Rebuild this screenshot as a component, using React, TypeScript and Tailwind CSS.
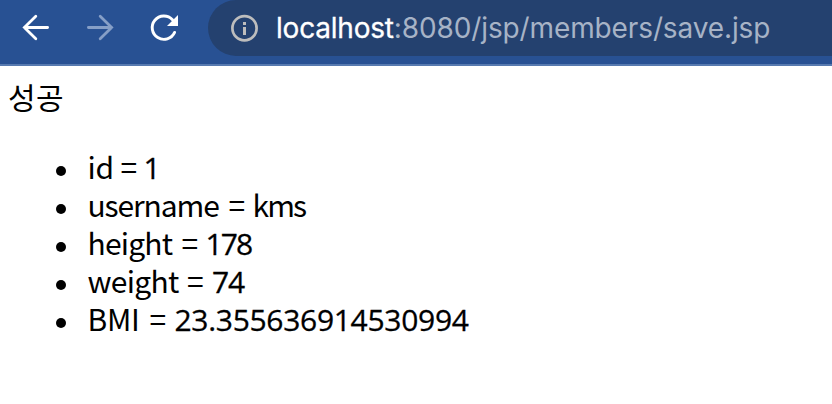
const details = [
  { name: 'id', value: '1', nameClass: 'w-[33px] tracking-[-0.2px]', valueClass: '-ml-px' },
  { name: 'username', value: 'kms', nameClass: 'w-[141px] tracking-[-1.1px]', valueClass: "font-['Noto_Sans_CJK_KR',sans-serif] tracking-[-1.9px] [-webkit-text-stroke:0px]" },
  { name: 'height', value: '178', nameClass: 'w-[94px] tracking-[-0.8px]', valueClass: 'tracking-[-1.9px]' },
  { name: 'weight', value: '74', nameClass: 'w-[99.5px] tracking-[-0.7px]', valueClass: 'ml-px tracking-[-1.2px]' },
  { name: 'BMI', value: '23.355636914530994', nameClass: 'w-[62px] tracking-[-0.3px]', valueClass: 'ml-px tracking-[-0.3px]' },
];

function Toolbar() {
  return (
    <header className="flex h-[66px] items-start border-b-2 border-[#577ab0] bg-[#285193]">
      <svg className="h-14 w-[208px] shrink-0" viewBox="0 0 208 56" fill="none" strokeLinecap="round">
        <path d="M47.6 27.5H24.4M35.8 16.3L24.4 27.5L35.8 38.7" stroke="#fff" strokeWidth="2.8" />
        <path d="M88.4 27.5H111.6M100.2 16.3L111.6 27.5L100.2 38.7" stroke="#869fc7" strokeWidth="2.8" />
        <path d="M174.6 32.4A11.7 11.7 0 1 1 172.5 19.7" stroke="#fff" strokeWidth="2.9" />
        <path d="M178 15V26H167Z" fill="#fff" />
      </svg>
      <div className="flex h-14 min-w-0 flex-1 items-center rounded-l-full bg-[#24416f] pl-[22px]">
        <svg className="h-7 w-7 shrink-0" viewBox="0 0 28 28" fill="none">
          <circle cx="14.5" cy="14.2" r="12.1" stroke="#bdbdbd" strokeWidth="2.7" />
          <path d="M14.5 8V11M14.5 13V21" stroke="#bdbdbd" strokeWidth="3" />
        </svg>
        <p className="ml-[18px] whitespace-nowrap font-['Inter',sans-serif] text-[28px] leading-[56px] tracking-[-0.12px] text-[#a7b3c6]">
          <span className="tracking-[-0.2px] text-white [-webkit-text-stroke:0.3px_white]">localhost</span>:8080/jsp/members/save.jsp
        </p>
      </div>
    </header>
  );
}

export default function App() {
  return (
    <div className="h-[404px] w-[832px] overflow-hidden bg-white text-black">
      <Toolbar />
      <main className="px-2 pt-[11px] font-['Noto_Sans_CJK_KR',sans-serif] text-[30px] leading-[38px]">
        <p className="tracking-[0.5px]">성공</p>
        <ul className="mt-8 pl-12">
          {details.map(({ name, value, nameClass, valueClass }) => (
            <li key={name} className="flex h-[38px] items-baseline whitespace-nowrap font-['Open_Sans',sans-serif]">
              <span className="mr-[21.5px] size-[10px] shrink-0 -translate-y-[3px] rounded-full bg-black" />
              <span className={`font-['Noto_Sans_CJK_KR',sans-serif] ${nameClass}`}>{name}</span>
              <span className="w-[24px] font-['Noto_Sans_CJK_KR',sans-serif]">=</span>
              <span className={`[-webkit-text-stroke:0.3px_black] ${valueClass}`}>{value}</span>
            </li>
          ))}
        </ul>
      </main>
    </div>
  );
}
